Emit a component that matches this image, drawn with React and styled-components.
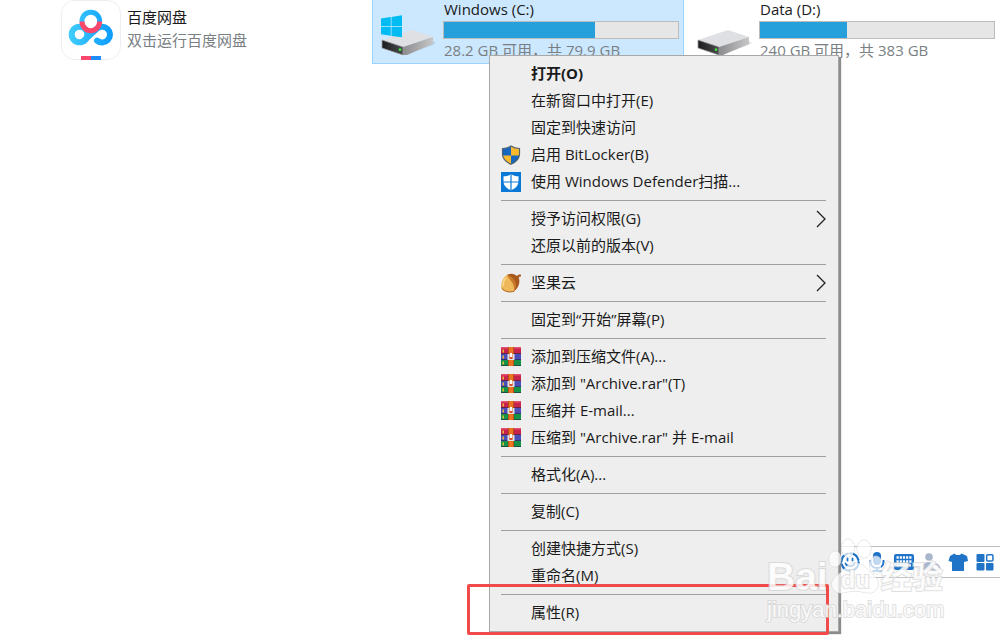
import React from "react";
import styled, { createGlobalStyle, css } from "styled-components";

const GlobalStyle = createGlobalStyle`
  * { box-sizing: border-box; }
  body {
    margin: 0;
    background: #fff;
    color: #1a1a1a;
    font-family: "Open Sans", "Noto Sans CJK SC", sans-serif;
    font-size: 15px;
  }
`;

const Page = styled.main`
  position: relative;
  min-height: 100vh;
  overflow: hidden;
`;

const TileGrid = styled.section`
  display: grid;
  grid-template-columns: repeat(3, minmax(0, 1fr));
  column-gap: 4px;
  padding-left: 56px;
`;

const Tile = styled.article`
  display: flex;
  align-items: flex-start;
  gap: 6px;
  height: 64px;
  padding: 0 4px 0 ${(p) => (p.$app ? 4 : 8)}px;
  border: 1px solid transparent;
  border-top: 0;
  ${(p) =>
    p.$selected &&
    css`
      background: #cce8ff;
      border-color: #99d1ff;
    `}
`;

const TileText = styled.div`
  flex: 1;
  min-width: 0;
  padding-top: ${(p) => (p.$app ? 6 : 0)}px;
`;

const TileName = styled.div`
  padding-left: ${(p) => (p.$app ? 0 : 1)}px;
  line-height: ${(p) => (p.$app ? 22 : 18)}px;
  white-space: nowrap;
`;

const TileNote = styled.div`
  padding-left: ${(p) => (p.$app ? 0 : 1)}px;
  line-height: ${(p) => (p.$app ? 24 : 22)}px;
  color: #7a7f84;
  white-space: nowrap;
`;

const UsageTrack = styled.div`
  height: 18px;
  margin-top: 3px;
  border: 1px solid #bcbcbc;
  background: #e6e6e6;
`;

const UsageFill = styled.div`
  height: 100%;
  background: #26a0da;
`;

const AppIcon = styled.svg`
  flex: none;
  width: 60px;
  height: 60px;
`;

const DriveArt = styled.svg`
  flex: none;
  width: 56px;
  height: 60px;
`;

const Menu = styled.div`
  position: absolute;
  top: 55px;
  left: 489px;
  width: 350px;
  padding: 4px 0 5px;
  border: 1px solid #a8a8a8;
  background: #eee;
  box-shadow: 2px 2px 1px #8c8c8c;
`;

const MenuGroup = styled.div`
  position: relative;
  & + &::before {
    content: "";
    display: block;
    height: 1px;
    margin: 5px 12px 4px 11px;
    background: #a0a0a0;
  }
`;

const MenuItem = styled.button`
  display: grid;
  grid-template-columns: 20px 1fr 10px;
  column-gap: 10px;
  align-items: center;
  width: 100%;
  height: 27px;
  padding: 0 12px 0 11px;
  border: 0;
  background: transparent;
  color: #1a1a1a;
  font: inherit;
  font-weight: ${(p) => (p.$strong ? 700 : 400)};
  line-height: 27px;
  text-align: left;
  white-space: nowrap;
`;

const MenuIcon = styled.svg`
  display: block;
  width: 20px;
  height: 20px;
`;

const Arrow = styled.svg`
  display: block;
  width: 10px;
  height: 18px;
`;

const HighlightFrame = styled.div`
  position: absolute;
  top: -10px;
  bottom: -9px;
  left: -23px;
  right: 9px;
  border: 3px solid #f04a4a;
  border-radius: 2px;
`;

const ImeBar = styled.div`
  position: absolute;
  top: 546px;
  right: 0;
  display: flex;
  align-items: center;
  gap: 5px;
  height: 32px;
  padding: 0 4px 0 8px;
  border: solid #bcbec4;
  border-width: 1px 0;
  background: #fff;
`;

const ImeButton = styled.button`
  display: block;
  width: 22px;
  height: 22px;
  padding: 0;
  border: 0;
  background: transparent;
  color: ${(p) => (p.$muted ? "#aab6cc" : "#1f74c8")};
  svg { display: block; width: 22px; height: 22px; }
`;

const Watermark = styled.div`
  position: absolute;
  top: 538px;
  left: 767px;
  color: rgba(255, 255, 255, 0.85);
  font-family: "Liberation Sans", "Noto Sans CJK SC", sans-serif;
  white-space: nowrap;
  pointer-events: none;
  paint-order: stroke fill;
  -webkit-text-stroke: 2px rgba(205, 205, 205, 0.6);
`;

const BrandRow = styled.div`
  display: flex;
  align-items: flex-end;
  height: 58px;
  font-size: 39px;
  font-weight: 700;
  line-height: 38px;
`;

const Paw = styled.div`
  position: relative;
  width: 54px;
  height: 58px;
  margin-left: -1px;
  svg { display: block; width: 54px; height: 58px; }
`;

const PawText = styled.span`
  position: absolute;
  left: 14px;
  bottom: 1px;
  font-size: 24px;
  line-height: 30px;
`;

const BrandCjk = styled.span`
  font-size: 31px;
  line-height: 36px;
`;

const SiteName = styled.div`
  font-size: 22px;
  line-height: 28px;
`;

function BaiduDiskIcon() {
  return (
    <AppIcon viewBox="0 0 60 60" aria-hidden="true">
      <defs>
        <linearGradient id="diskBlue" gradientUnits="userSpaceOnUse" x1="8" x2="52" y1="0" y2="0">
          <stop offset="0" stopColor="#41cdfb" />
          <stop offset="1" stopColor="#0a9bff" />
        </linearGradient>
      </defs>
      <rect x="0.5" y="0.5" width="59" height="59" rx="13" fill="#fff" stroke="#eee" />
      <g fill="none" stroke="url(#diskBlue)" strokeWidth="6" strokeLinecap="round">
        <circle cx="18.500" cy="34.500" r="7.800" />
        <path d="M23 40.500 L35.500 29 A7.900 7.900 0 1 1 36 40.600" />
      </g>
      <g fill="none" strokeWidth="5">
        <path d="M21 22 V21 A8.800 8.800 0 0 1 38.600 21 V22" stroke="url(#diskBlue)" />
        <path d="M21 21.500 A8.800 9.300 0 0 0 38.600 21.500" stroke="#fb476c" />
      </g>
      <path d="M20 56h10v4H20z" fill="#fb476c" />
      <path d="M30 56h10v4H30z" fill="#1e8dff" />
    </AppIcon>
  );
}

function DriveIcon({ system, id }) {
  return (
    <DriveArt viewBox="0 0 56 60" aria-hidden="true">
      <defs>
        <linearGradient id={id + "side"} x1="0" x2="1">
          <stop offset="0" stopColor="#8c8c8e" />
          <stop offset="1" stopColor="#c6c6c8" />
        </linearGradient>
        <linearGradient id={id + "front"} x1="0" x2="1">
          <stop offset="0" stopColor="#1c1c1e" />
          <stop offset="1" stopColor="#4a4b4d" />
        </linearGradient>
      </defs>
      <path d="M22 55 L52 45 L55 43 L52 41 Z" fill="#000" opacity="0.1" />
      <path d="M1 40 L31 30 L52 37 L22 47 Z" fill="#dfe0e4" />
      <path d="M22 47 L52 37 V44 L26 55 H22 Z" fill={"url(#" + id + "side)"} />
      <path d="M1 40 L22 47 V55 L1 48 Z" fill={"url(#" + id + "front)"} stroke="#98999b" strokeWidth="0.8" />
      <circle cx="19" cy="49.7" r="1.4" fill="#3fe03f" />
      {system && (
        <path
          d="M0 18.500 L9.800 17 V26 H0 Z M10.500 16.900 L21 15.300 V26 H10.500 Z M0 26.700 H9.800 V35.800 L0 34.300 Z M10.500 26.700 H21 V37.300 L10.500 35.900 Z"
          fill="#00bcf2"
        />
      )}
    </DriveArt>
  );
}

const icons = {
  shield: (
    <MenuIcon viewBox="0 0 20 20" aria-hidden="true">
      <path d="M10 1 C7 3 4 3.500 1.500 3.500 V9 C1.500 14 5 17 10 19.300 Z" fill="#1667c0" />
      <path d="M10 1 C13 3 16 3.500 18.500 3.500 V9 C18.500 14 15 17 10 19.300 Z" fill="#fdb92e" />
      <path d="M10 10.500 H18.300 C17.800 14.500 14.500 17.300 10 19.300 Z" fill="#1667c0" />
      <path d="M10 10.500 H1.700 C2.200 14.500 5.500 17.300 10 19.300 Z" fill="#fdb92e" />
      <path
        d="M10 1 C7 3 4 3.500 1.500 3.500 V9 C1.500 14 5 17 10 19.300 C15 17 18.500 14 18.500 9 V3.500 C16 3.500 13 3 10 1 Z"
        fill="none"
        stroke="#55626b"
        strokeWidth="1.200"
      />
    </MenuIcon>
  ),
  defender: (
    <MenuIcon viewBox="0 0 20 20" aria-hidden="true">
      <path d="M0 0h20v20H0z" fill="#0a78d7" />
      <path d="M10 2 C8 3.500 5.500 4.300 2.500 4.300 V9 C2.500 13.500 5.500 16.500 10 18.300 C14.500 16.500 17.500 13.500 17.500 9 V4.300 C14.500 4.300 12 3.500 10 2 Z" fill="#fff" />
      <path d="M10 2 V18.500 M2 10 H18" stroke="#0a78d7" strokeWidth="1.200" />
    </MenuIcon>
  ),
  nut: (
    <MenuIcon viewBox="0 0 20 20" aria-hidden="true">
      <path d="M6 2 C10 -0.500 14 1 16 3 C17 1.500 18.500 1 20 1.700 V3.500 C18.500 3.300 18 4 17.800 5 C19.500 9 17.500 15 13 18.500 C11 12 9 6 6 2 Z" fill="#a8591b" />
      <path d="M6 2 C1.500 5 -0.500 10 0.500 16 C3.500 19.500 9 20 13 18.500 C16 13 13 5 6 2 Z" fill="#efb85a" />
      <path d="M6 2 C9 8 14 10 13 18.500 C17 14 15 4 6 2 Z" fill="#c97b2c" />
      <path d="M1 15.500 C4 19 9 19.500 13 18.300" fill="none" stroke="#a8682a" />
      <path d="M5 5 C3 7 2 10 2.300 13" fill="none" stroke="#f9d78d" strokeWidth="1.500" />
    </MenuIcon>
  ),
  rar: (
    <MenuIcon viewBox="0 0 20 20" aria-hidden="true">
      <path d="M0 0h20v7H0z" fill="#c8234c" />
      <path d="M0 7h20v6H0z" fill="#4a4fb8" />
      <path d="M0 13h20v6H0z" fill="#159247" />
      <path d="M0 0h20v1.500H0z" fill="#e3516f" />
      <path d="M0 6h20v1H0zM0 12h20v1H0zM0 18h20v1H0z" fill="#27243f" opacity="0.600" />
      <path d="M1.500 2.500h1.500v3H1.500zM1.500 8.500h1.500v3H1.500zM1.500 14.500h1.500v3H1.500z" fill="#e9b83c" />
      <path d="M7 0h6v19H7z" fill="#ec7420" />
      <path d="M7 0h1v19H7zM12 0h1v19h-1z" fill="#b64e17" />
      <path d="M6.500 7 H8.500 V11 H11.500 V7 H13.500 V13 H6.500 Z" fill="#dde0e4" />
      <path d="M9 6h2v4H9z" fill="#fff" />
      <path d="M8.500 10h3v2h-3z" fill="#d84c2b" />
    </MenuIcon>
  ),
};

const menuGroups = [
  [
    { label: "打开(O)", strong: true },
    { label: "在新窗口中打开(E)" },
    { label: "固定到快速访问" },
    { label: "启用 BitLocker(B)", icon: "shield" },
    { label: "使用 Windows Defender扫描...", icon: "defender" },
  ],
  [{ label: "授予访问权限(G)", arrow: true }, { label: "还原以前的版本(V)" }],
  [{ label: "坚果云", icon: "nut", arrow: true }],
  [{ label: "固定到“开始”屏幕(P)" }],
  [
    { label: "添加到压缩文件(A)...", icon: "rar" },
    { label: '添加到 "Archive.rar"(T)', icon: "rar" },
    { label: "压缩并 E-mail...", icon: "rar" },
    { label: '压缩到 "Archive.rar" 并 E-mail', icon: "rar" },
  ],
  [{ label: "格式化(A)..." }],
  [{ label: "复制(C)" }],
  [{ label: "创建快捷方式(S)" }, { label: "重命名(M)" }],
  [{ label: "属性(R)" }],
];

const imeTools = [
  {
    name: "表情",
    art: (
      <g fill="none" stroke="currentColor" strokeWidth="2.200" strokeLinecap="round">
        <circle cx="11" cy="11" r="8.600" strokeDasharray="11 2.500" />
        <path d="M8.500 7.500v2M13.500 7.500v2M6.500 12.500c1.500 3.500 7.500 3.500 9 0" strokeWidth="1.800" />
      </g>
    ),
  },
  {
    name: "语音",
    art: (
      <g fill="none" stroke="currentColor" strokeWidth="2">
        <rect x="7" y="1" width="8" height="13" rx="4" fill="currentColor" stroke="none" />
        <path d="M4.500 9v2c0 8 13 8 13 0V9M11 17v3M6.500 20h9" />
      </g>
    ),
  },
  {
    name: "键盘",
    art: (
      <g>
        <rect x="1" y="3" width="20" height="16" rx="2" fill="currentColor" />
        <path d="M3.500 6.500h15M3.500 10.500h15" stroke="#fff" strokeWidth="2.400" strokeDasharray="2.200 1" />
        <path d="M4 14.500h2M7 14.500h8M16 14.500h2" stroke="#fff" strokeWidth="2.200" />
      </g>
    ),
  },
  {
    name: "账户",
    muted: true,
    art: (
      <g fill="currentColor">
        <circle cx="9" cy="6" r="3.800" />
        <path d="M2 19.500 C2 13 5 11 9 11 C12 11 14 12 15 13 L10 17 V19.500 Z" />
        <path
          d="M12 18.700 a2.500 2.500 0 0 1 1.500 -4 a3 3 0 0 1 5.500 1 a1.800 1.800 0 0 1 0 3 z"
          fill="#fff"
          stroke="currentColor"
          strokeWidth="1.500"
        />
      </g>
    ),
  },
  {
    name: "皮肤",
    art: (
      <path
        d="M7.500 2.500 C9 4.500 13 4.500 14.500 2.500 L20 5 L21 10 L17 11 V20 H5 V11 L1.500 10 L3 5 Z"
        fill="currentColor"
      />
    ),
  },
  {
    name: "工具箱",
    art: (
      <g fill="currentColor">
        <rect x="2.500" y="3" width="8" height="8" rx="1" />
        <rect x="2.500" y="12" width="8" height="7.500" rx="1" />
        <rect x="12" y="12" width="7.500" height="7.500" rx="1" />
        <rect x="12.700" y="3.700" width="6.200" height="6.200" rx="1" fill="none" stroke="currentColor" strokeWidth="1.500" />
      </g>
    ),
  },
];

function DriveTile({ id, name, free, total, selected, system }) {
  const used = ((total - free) / total) * 100;
  return (
    <Tile $selected={selected}>
      <DriveIcon id={id} system={system} />
      <TileText>
        <TileName>{name}</TileName>
        <UsageTrack role="progressbar" aria-label={name} aria-valuenow={Math.round(used)}>
          <UsageFill style={{ width: used + "%" }} />
        </UsageTrack>
        <TileNote>{`${free} GB 可用，共 ${total} GB`}</TileNote>
      </TileText>
    </Tile>
  );
}

function ContextMenu() {
  return (
    <Menu role="menu">
      {menuGroups.map((group, index) => (
        <MenuGroup key={index} role="group">
          {group.map((item) => (
            <MenuItem key={item.label} type="button" role="menuitem" $strong={item.strong}>
              {item.icon ? icons[item.icon] : <span />}
              <span>{item.label}</span>
              {item.arrow && (
                <Arrow viewBox="0 0 10 18" aria-hidden="true">
                  <path d="M1 1 L9 9 L1 17" fill="none" stroke="#222" strokeWidth="1.300" />
                </Arrow>
              )}
            </MenuItem>
          ))}
          {index === menuGroups.length - 1 && <HighlightFrame />}
        </MenuGroup>
      ))}
    </Menu>
  );
}

function BrandMark() {
  return (
    <Watermark>
      <BrandRow>
        <span>Bai</span>
        <Paw>
          <svg viewBox="0 0 54 58" aria-hidden="true">
            <g fill="#fff" fillOpacity="0.720" stroke="#c4c4c4" strokeOpacity="0.600">
              <ellipse cx="8" cy="21" rx="6" ry="8" />
              <ellipse cx="21" cy="10" rx="6.500" ry="9" />
              <ellipse cx="37" cy="11" rx="7" ry="9" />
              <ellipse cx="49" cy="27" rx="6.500" ry="9" />
              <path d="M28 25 C20 25 18 32 12 36 C4 41 3 48 7 52 C12 58 20 53 28 53 C36 53 44 58 49 52 C54 46 51 41 45 36 C39 31 37 25 28 25 Z" />
            </g>
          </svg>
          <PawText>du</PawText>
        </Paw>
        <BrandCjk>经验</BrandCjk>
      </BrandRow>
      <SiteName>jingyan.baidu.com</SiteName>
    </Watermark>
  );
}

export default function App() {
  return (
    <>
      <GlobalStyle />
      <Page>
        <TileGrid>
          <Tile $app>
            <BaiduDiskIcon />
            <TileText $app>
              <TileName $app>百度网盘</TileName>
              <TileNote $app>双击运行百度网盘</TileNote>
            </TileText>
          </Tile>
          <DriveTile id="c" name="Windows (C:)" free={28.2} total={79.9} selected system />
          <DriveTile id="d" name="Data (D:)" free={240} total={383} />
        </TileGrid>
        <ImeBar role="toolbar" aria-label="输入法">
          {imeTools.map((tool) => (
            <ImeButton key={tool.name} type="button" aria-label={tool.name} $muted={tool.muted}>
              <svg viewBox="0 0 22 22" aria-hidden="true">{tool.art}</svg>
            </ImeButton>
          ))}
        </ImeBar>
        <ContextMenu />
        <BrandMark />
      </Page>
    </>
  );
}
